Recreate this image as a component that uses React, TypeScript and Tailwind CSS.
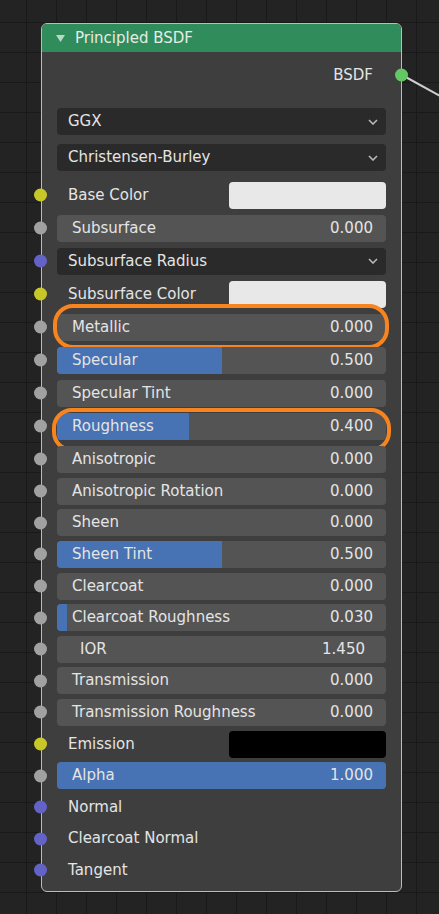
import React from "react";

type Row =
  | { kind: "color"; label: string; color: string; socket: string }
  | { kind: "slider"; label: string; value: number; socket: string; ring?: "metal" | "rough" }
  | { kind: "number"; label: string; value: number; socket: string }
  | { kind: "menu"; label: string; socket: string }
  | { kind: "text"; label: string; socket: string };

const YELLOW = "#c7c729";
const GRAY = "#a1a1a1";
const PURPLE = "#6363c7";

const firstRows: Row[] = [
  { kind: "color", label: "Base Color", color: "#e8e8e8", socket: YELLOW },
  { kind: "slider", label: "Subsurface", value: 0, socket: GRAY },
  { kind: "menu", label: "Subsurface Radius", socket: PURPLE },
  { kind: "color", label: "Subsurface Color", color: "#e8e8e8", socket: YELLOW },
  { kind: "slider", label: "Metallic", value: 0, socket: GRAY, ring: "metal" },
  { kind: "slider", label: "Specular", value: 0.5, socket: GRAY },
  { kind: "slider", label: "Specular Tint", value: 0, socket: GRAY },
  { kind: "slider", label: "Roughness", value: 0.4, socket: GRAY, ring: "rough" },
  { kind: "slider", label: "Anisotropic", value: 0, socket: GRAY },
];

const restRows: Row[] = [
  { kind: "slider", label: "Anisotropic Rotation", value: 0, socket: GRAY },
  { kind: "slider", label: "Sheen", value: 0, socket: GRAY },
  { kind: "slider", label: "Sheen Tint", value: 0.5, socket: GRAY },
  { kind: "slider", label: "Clearcoat", value: 0, socket: GRAY },
  { kind: "slider", label: "Clearcoat Roughness", value: 0.03, socket: GRAY },
  { kind: "number", label: "IOR", value: 1.45, socket: GRAY },
  { kind: "slider", label: "Transmission", value: 0, socket: GRAY },
  { kind: "slider", label: "Transmission Roughness", value: 0, socket: GRAY },
  { kind: "color", label: "Emission", color: "#000000", socket: YELLOW },
  { kind: "slider", label: "Alpha", value: 1, socket: GRAY },
  { kind: "text", label: "Normal", socket: PURPLE },
  { kind: "text", label: "Clearcoat Normal", socket: PURPLE },
  { kind: "text", label: "Tangent", socket: PURPLE },
];

function Chevron() {
  return (
    <svg width="10" height="6" viewBox="0 0 10 6" className="shrink-0">
      <polyline points="1,1 5,5 9,1" fill="none" stroke="#b8b8b8" strokeWidth="1.6" />
    </svg>
  );
}

function Socket({ color }: { color: string }) {
  return (
    <span
      className="absolute left-[-8px] top-1/2 block h-[13px] w-[13px] -translate-y-1/2 rounded-full"
      style={{ backgroundColor: color }}
    />
  );
}

function Menu({ label }: { label: string }) {
  return (
    <div className="h-[27px] w-full rounded-[4px] bg-[#2a2a2a] flex items-center justify-between pl-[11px] pr-[8px] text-[#e4e4e4]">
      <span>{label}</span>
      <Chevron />
    </div>
  );
}

function SocketRow({ row, h }: { row: Row; h: string }) {
  return (
    <div className={`relative flex items-center px-[15px] ${h}`}>
      <Socket color={row.socket} />
      {row.kind === "color" && (
        <div className="flex w-full items-center justify-between">
          <span className="pl-[11px] text-[#e4e4e4]">{row.label}</span>
          <span className="h-[27px] w-[157px] rounded-[4px]" style={{ backgroundColor: row.color }} />
        </div>
      )}
      {row.kind === "menu" && <Menu label={row.label} />}
      {row.kind === "text" && <span className="pl-[11px] text-[#e4e4e4]">{row.label}</span>}
      {row.kind === "number" && (
        <div className="h-[27px] w-full rounded-[4px] bg-[#545454] flex items-center justify-between pl-[23px] pr-[21px] text-[#e4e4e4]">
          <span>{row.label}</span>
          <span>{row.value.toFixed(3)}</span>
        </div>
      )}
      {row.kind === "slider" && (
        <div className="relative h-[27px] w-full overflow-hidden rounded-[4px] bg-[#545454] text-[#e4e4e4]">
          <div className="absolute inset-y-0 left-0 bg-[#4772b3]" style={{ width: `${row.value * 100}%` }} />
          <div className="relative flex h-full items-center justify-between pl-[15px] pr-[13px]">
            <span>{row.label}</span>
            <span>{row.value.toFixed(3)}</span>
          </div>
        </div>
      )}
      {row.kind === "slider" && row.ring === "metal" && (
        <span className="absolute left-[11px] top-[-7px] h-[45px] w-[336px] rounded-[20px] border-[4px] border-[#f7841f]" />
      )}
      {row.kind === "slider" && row.ring === "rough" && (
        <span className="absolute left-[10px] top-[-2px] h-[44px] w-[339px] rounded-[20px] border-[4px] border-[#f7841f]" />
      )}
    </div>
  );
}

export default function App() {
  return (
    <div
      className="relative h-[914px] w-[439px] overflow-hidden bg-[#232323] bg-[linear-gradient(to_right,#191919_1px,transparent_1px),linear-gradient(to_bottom,#191919_1px,transparent_1px)] bg-[size:30px_30px] bg-[position:26px_22px] pt-[23px] pl-[41px] text-[15px] leading-none"
      style={{ fontFamily: '"DejaVu Sans", "Liberation Sans", sans-serif' }}
    >
      {/* wire leaving the output socket */}
      <svg className="absolute left-0 top-0" width="439" height="914">
        <line x1="402" y1="75" x2="440" y2="96" stroke="#cfcfcf" strokeWidth="2" />
      </svg>

      <div className="relative h-[869px] w-[361px] rounded-[6px] border border-[#bcbcbc] bg-[#3e3e3e]">
        {/* header */}
        <div className="flex h-[28px] items-center rounded-t-[5px] bg-[#308c5b] pl-[14px] text-[#e4ece7]">
          <svg width="9" height="8" viewBox="0 0 9 8" className="mr-[10px] mt-[2px]">
            <polygon points="0,0 9,0 4.5,7" fill="#b9d9c6" />
          </svg>
          <span>Principled BSDF</span>
        </div>

        {/* output */}
        <div className="relative mt-[9px] flex h-[28px] items-center justify-end pr-[28px] text-[#e4e4e4]">
          <span>BSDF</span>
          <span className="absolute right-[-7px] top-1/2 block h-[13px] w-[13px] -translate-y-1/2 rounded-full bg-[#63c763]" />
        </div>

        <div className="mt-[19px] px-[15px]">
          <Menu label="GGX" />
          <div className="mt-[9px]">
            <Menu label="Christensen-Burley" />
          </div>
        </div>

        <div className="mt-[7.5px]">
          {firstRows.map((r) => (
            <SocketRow key={r.label} row={r} h="h-[33px]" />
          ))}
          {restRows.map((r) => (
            <SocketRow key={r.label} row={r} h="h-[31.6px]" />
          ))}
        </div>
      </div>
    </div>
  );
}
